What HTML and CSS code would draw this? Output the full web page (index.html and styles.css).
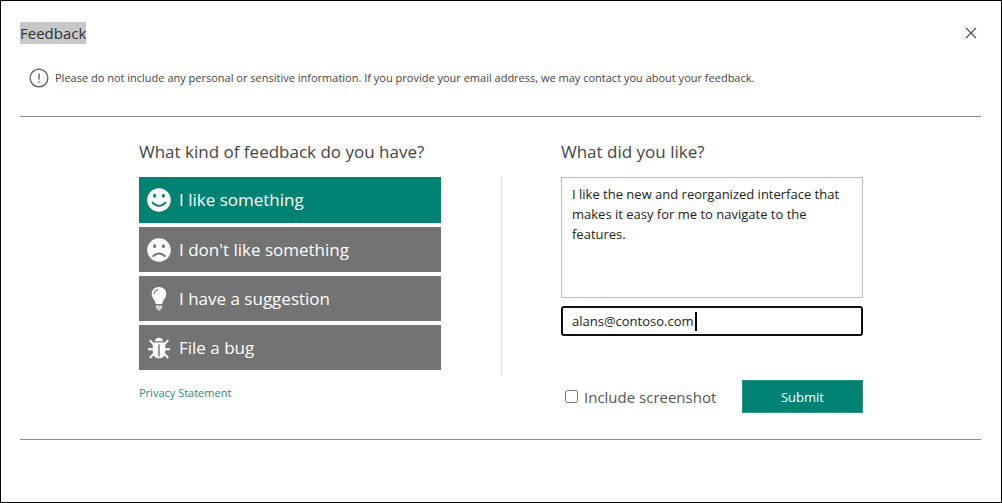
FILE: index.html
```html
<!DOCTYPE html>
<html lang="en">
<head>
<meta charset="utf-8">
<meta name="viewport" content="width=device-width, initial-scale=1">
<title>Feedback</title>
<link rel="stylesheet" href="styles.css">
</head>
<body>
<main class="dialog">
  <header class="dialog-header">
    <h1 class="title"><mark class="selected">Feedback</mark></h1>
    <button class="close" type="button" aria-label="Close">
      <svg width="12" height="12" viewBox="0 0 12 12" aria-hidden="true"><path d="M1 1L11 11M11 1L1 11" fill="none" stroke="#4a4f5c" stroke-width="1.2"/></svg>
    </button>
  </header>
  <div class="notice">
    <svg width="20" height="20" viewBox="0 0 20 20" aria-hidden="true"><circle cx="10" cy="10" r="8.9" fill="none" stroke="#555" stroke-width="1.2"/><path d="M10 5.5V11.6M10 13V14.5" stroke="#555" stroke-width="1.3"/></svg>
    <p class="notice-text">Please do not include any personal or sensitive information. If you provide your email address, we may contact you about your feedback.</p>
  </div>
  <form class="form">
    <section class="column">
      <h2 class="heading">What kind of feedback do you have?</h2>
      <div class="choices">
        <button class="choice active" type="button" aria-pressed="true">
          <svg class="icon" viewBox="0 0 24 24" aria-hidden="true"><circle cx="12" cy="12" r="11.8" fill="#fff"/><g fill="#008272"><ellipse cx="7.6" cy="7.8" rx="1.5" ry="2"/><ellipse cx="16.4" cy="7.8" rx="1.5" ry="2"/></g><path d="M5 14.2Q12 21.6 19 14.2" fill="none" stroke="#008272" stroke-width="1.9"/></svg>
          I like something
        </button>
        <button class="choice" type="button" aria-pressed="false">
          <svg class="icon" viewBox="0 0 24 24" aria-hidden="true"><circle cx="12" cy="12" r="11.8" fill="#fff"/><g fill="#737373"><ellipse cx="7.6" cy="8.2" rx="1.5" ry="1.9"/><ellipse cx="16.4" cy="8.2" rx="1.5" ry="1.9"/></g><path d="M5.6 18.6Q12 12.4 18.4 18.6" fill="none" stroke="#737373" stroke-width="1.8"/></svg>
          I don't like something
        </button>
        <button class="choice" type="button" aria-pressed="false">
          <svg class="icon" viewBox="0 0 24 24" aria-hidden="true"><path d="M12 0C7.8 0 4.7 3.1 4.7 7.1C4.7 11 8 12.5 8.7 17H15.3C16 12.5 19.3 11 19.3 7.1C19.3 3.1 16.2 0 12 0Z" fill="#fff"/><path d="M7.1 7.2Q7.2 3.4 10.9 2.6" fill="none" stroke="#737373" stroke-width="1.1"/><path d="M8.8 18.3H15.2V21.2L13.5 22.2V23.5H10.5V22.2L8.8 21.2Z" fill="#d2d2d2"/></svg>
          I have a suggestion
        </button>
        <button class="choice" type="button" aria-pressed="false">
          <svg class="icon" viewBox="0 0 24 24" aria-hidden="true"><path d="M7.8 5.2A4.3 4.5 0 0 1 16.2 5.2Z" fill="#fff"/><path d="M5.8 6.4H18.2V15.5Q18.2 21 13.5 22.3H10.5Q5.8 21 5.8 15.5Z" fill="#fff"/><path d="M12 8.6V20.5" stroke="#737373" stroke-width="1.4"/><path d="M6.8 8.5L2.7 4.2M17.2 8.5L21.3 4.2M6.5 13.3H1M17.5 13.3H23M7 17.5L2.8 22M17 17.5L21.2 22" fill="none" stroke="#fff" stroke-width="1.9"/></svg>
          File a bug
        </button>
      </div>
      <a class="privacy" href="#">Privacy Statement</a>
    </section>
    <div class="divider"></div>
    <section class="column">
      <h2 class="heading"><label for="comment">What did you like?</label></h2>
      <textarea class="comment" id="comment">I like the new and reorganized interface that makes it easy for me to navigate to the features.</textarea>
      <div class="email-field">
        <input class="email" type="email" value="alans@contoso.com" aria-label="Email address">
        <span class="caret"></span>
      </div>
      <div class="actions">
        <label class="check"><input class="checkbox" type="checkbox">Include screenshot</label>
        <button class="submit" type="submit">Submit</button>
      </div>
    </section>
  </form>
</main>
</body>
</html>
```

FILE: styles.css
```css
* { box-sizing: border-box; }
body {
  margin: 0;
  background: #fff;
  color: #444;
  font-family: "Open Sans", "Noto Sans", sans-serif;
}
button, input, textarea { font-family: inherit; }
.dialog {
  min-height: 100vh;
  padding: 20px 20px 20px 19px;
  border: 1px solid #000;
}
.dialog-header {
  display: flex;
  justify-content: space-between;
  align-items: center;
  height: 24px;
}
.title {
  margin: 0;
  font-size: 15px;
  line-height: 22px;
  font-weight: 400;
}
.selected {
  display: block;
  background: #c8c8c8;
  color: #333;
}
.close {
  display: flex;
  padding: 4px;
  border: 0;
  background: none;
}
.notice {
  display: flex;
  align-items: center;
  gap: 6px;
  padding: 23px 9px 28px;
  border-bottom: 1px solid #8a8a8a;
}
.notice svg { flex: none; }
.notice-text {
  margin: 0;
  font-size: 11px;
  line-height: 20px;
}
.form {
  display: flex;
  justify-content: center;
  padding: 21px 19px 26px 20px;
  border-bottom: 1px solid #8a8a8a;
}
.column {
  flex: 1;
  max-width: 302px;
}
.heading {
  margin: 0 0 12px;
  font-size: 17px;
  line-height: 27px;
  font-weight: 400;
}
.divider {
  width: 1px;
  margin: 39px 59px 38px 60px;
  background: #ddd;
}
.choices {
  display: flex;
  flex-direction: column;
  gap: 4px;
}
.choice {
  display: flex;
  align-items: center;
  gap: 8px;
  min-height: 45px;
  padding: 0 8px;
  border: 0;
  background: #737373;
  color: #fff;
  font-size: 17px;
  line-height: 24px;
  text-align: left;
}
.choice.active {
  min-height: 46px;
  background: #008272;
}
.icon {
  width: 24px;
  height: 24px;
}
.privacy {
  display: block;
  margin-top: 13px;
  color: #2b8a7e;
  font-size: 11px;
  line-height: 20px;
  text-decoration: none;
}
.comment {
  display: block;
  width: 100%;
  height: 121px;
  padding: 6px 10px;
  border: 1px solid #bbb;
  color: #222;
  font-size: 13px;
  line-height: 20px;
  resize: none;
}
.email-field {
  position: relative;
  margin-top: 8px;
}
.email {
  display: block;
  width: 100%;
  height: 30px;
  padding: 0 9px;
  border: 2px solid #111;
  border-radius: 3px;
  background: #fff;
  color: #222;
  font-size: 13px;
}
.caret {
  position: absolute;
  top: 6px;
  left: 134px;
  width: 2px;
  height: 19px;
  background: #000;
}
.actions {
  display: flex;
  justify-content: space-between;
  align-items: center;
  margin-top: 44px;
}
.check {
  display: flex;
  align-items: center;
  gap: 6px;
  padding-left: 4px;
  font-size: 15px;
  color: #555;
}
.checkbox {
  width: 13px;
  height: 13px;
  margin: 0;
}
.submit {
  width: 121px;
  height: 33px;
  border: 1px solid #2b9688;
  background: #008272;
  color: #fff;
  font-size: 13px;
}
```
